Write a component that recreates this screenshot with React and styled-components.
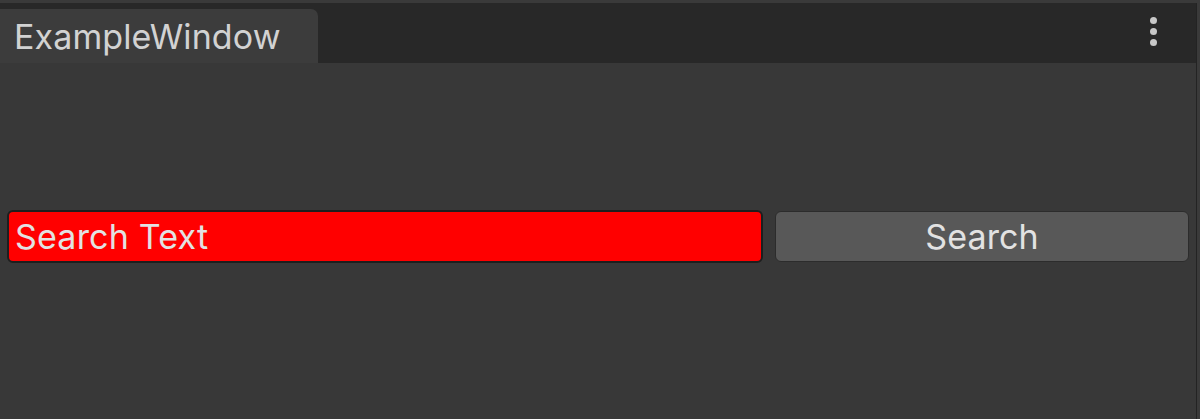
import React from 'react';
import styled, { createGlobalStyle } from 'styled-components';

const GlobalStyle = createGlobalStyle`
  html, body {
    margin: 0;
    padding: 0;
    background: #383838;
  }
  body {
    font-family: Inter, "Noto Sans", sans-serif;
  }
`;

const Styled = {
  Window: styled.div`
    display: flex;
    flex-direction: column;
    width: 1200px;
    height: 419px;
    background: #3a3a3a;
    padding-top: 3px;
    box-sizing: border-box;
  `,
  Frame: styled.div`
    display: flex;
    flex: 1 0 0;
    margin-right: 3px;
    border-right: 1px solid #232323;
    flex-direction: column;
    background: #383838;
  `,
  TabBar: styled.div`
    display: flex;
    align-items: flex-end;
    height: 60px;
    background: #282828;
  `,
  Tab: styled.div`
    display: flex;
    align-items: center;
    width: 318px;
    height: 54px;
    padding-left: 14px;
    box-sizing: border-box;
    background: #3c3c3c;
    border-top-right-radius: 7px;
    color: #d2d2d2;
    font-size: 34px;
    letter-spacing: 0.1px;
  `,
  Spacer: styled.div`
    flex: 1 0 0;
  `,
  Menu: styled.div`
    display: flex;
    flex-direction: column;
    gap: 4px;
    align-self: flex-start;
    margin-top: 14px;
    margin-right: 39px;
  `,
  Dot: styled.span`
    width: 7px;
    height: 7px;
    border-radius: 50%;
    background: #c8c8c8;
  `,
  Body: styled.div`
    display: flex;
    flex: 1 0 0;
    flex-direction: column;
    padding: 147px 7px 0 7px;
    background: #383838;
  `,
  Row: styled.div`
    display: flex;
    align-items: center;
    gap: 12px;
  `,
  Field: styled.div`
    display: flex;
    align-items: center;
    flex: 0 0 756px;
    height: 53px;
    padding-left: 6px;
    box-sizing: border-box;
    background: #ff0000;
    border: 2px solid #1e1e1e;
    border-radius: 6px;
    color: #e2e2e2;
    font-size: 34px;
    letter-spacing: 0.2px;
  `,
  Button: styled.div`
    display: flex;
    align-items: center;
    justify-content: center;
    flex: 0 0 414px;
    height: 51px;
    box-sizing: border-box;
    background: #585858;
    border: 1px solid #2c2c2c;
    border-radius: 6px;
    color: #e2e2e2;
    font-size: 34px;
    letter-spacing: 0.1px;
  `,
};

const App = () => (
  <>
    <GlobalStyle />
    <Styled.Window>
      <Styled.Frame>
        <Styled.TabBar>
          <Styled.Tab>ExampleWindow</Styled.Tab>
          <Styled.Spacer />
          <Styled.Menu>
            <Styled.Dot />
            <Styled.Dot />
            <Styled.Dot />
          </Styled.Menu>
        </Styled.TabBar>
        <Styled.Body>
          <Styled.Row>
            <Styled.Field>Search Text</Styled.Field>
            <Styled.Button>Search</Styled.Button>
          </Styled.Row>
        </Styled.Body>
      </Styled.Frame>
    </Styled.Window>
  </>
);

export default App;
